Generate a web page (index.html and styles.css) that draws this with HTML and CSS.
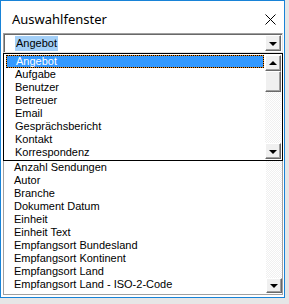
FILE: index.html
```html
<!DOCTYPE html>
<html>
<head>
<meta charset="utf-8">
<link rel="stylesheet" href="styles.css">
</head>
<body>
<div class="window">
  <div class="titlebar">
    <span class="title">Auswahlfenster</span>
    <svg class="close" width="11" height="11" viewBox="0 0 11 11"><path d="M0.5 0.5L10.5 10.5M10.5 0.5L0.5 10.5" stroke="#000" stroke-width="1" fill="none"/></svg>
  </div>
  <div class="content">
    <div class="combo">
      <span class="combo-text"><span class="sel">Angebot</span></span>
      <span class="btn combo-btn"><span class="tri-down"></span></span>
    </div>
    <div class="listbox">
      <div class="list-items">
        <div class="item">Ansprechpartner</div>
        <div class="item">Anzahl Sendungen</div>
        <div class="item">Autor</div>
        <div class="item">Branche</div>
        <div class="item">Dokument Datum</div>
        <div class="item">Einheit</div>
        <div class="item">Einheit Text</div>
        <div class="item">Empfangsort Bundesland</div>
        <div class="item">Empfangsort Kontinent</div>
        <div class="item">Empfangsort Land</div>
        <div class="item">Empfangsort Land - ISO-2-Code</div>
      </div>
      <div class="scrollbar">
        <div class="track"></div>
        <span class="btn sb-btn"><span class="tri-down"></span></span>
      </div>
    </div>
    <div class="dropdown">
      <div class="dd-items">
        <div class="item active">Angebot</div>
        <div class="item">Aufgabe</div>
        <div class="item">Benutzer</div>
        <div class="item">Betreuer</div>
        <div class="item">Email</div>
        <div class="item">Gesprächsbericht</div>
        <div class="item">Kontakt</div>
        <div class="item">Korrespondenz</div>
      </div>
      <div class="scrollbar dd-scroll">
        <span class="btn sb-btn"><span class="tri-up"></span></span>
        <span class="btn thumb"></span>
        <div class="track"></div>
        <span class="btn sb-btn"><span class="tri-down"></span></span>
      </div>
    </div>
  </div>
</div>
</body>
</html>
```
FILE: styles.css
```css
html, body {
  margin: 0;
  padding: 0;
}
body {
  background: #e6e6e6;
  width: 289px;
  height: 304px;
  overflow: hidden;
  font-family: "Liberation Sans", Arial, sans-serif;
}
.window {
  box-sizing: border-box;
  width: 285px;
  height: 298px;
  border: 1px solid #1883d7;
  background: #fff;
  display: flex;
  flex-direction: column;
}
.titlebar {
  height: 32px;
  display: flex;
  align-items: center;
  justify-content: space-between;
  padding: 0 8px 0 11px;
  flex: none;
}
.title {
  font-family: "Noto Sans", "Open Sans", sans-serif;
  font-size: 13px;
  color: #000;
  margin-top: 3px;
}
.close {
  display: block;
  margin-top: 4px;
}
.content {
  position: relative;
  padding: 0 1px 0 2px;
  flex: 1;
  display: flex;
  flex-direction: column;
}
.combo {
  box-sizing: border-box;
  height: 20px;
  border: 1px solid;
  border-color: #a0a0a0 #e3e3e3 #e3e3e3 #a0a0a0;
  box-shadow: inset 1px 1px 0 #696969;
  display: flex;
  align-items: center;
  justify-content: space-between;
  padding: 0 1px 0 11px;
  font-size: 11px;
}
.sel {
  display: inline-block;
  background: #a3cff7;
  color: #000;
  padding: 1px 1px;
  line-height: 13px;
}
.btn {
  box-sizing: border-box;
  display: flex;
  align-items: center;
  justify-content: center;
  background: #f0f0f0;
  border: 1px solid;
  border-color: #fff #696969 #696969 #fff;
  box-shadow: inset -1px -1px 0 #a0a0a0;
  flex: none;
}
.combo-btn {
  width: 16px;
  height: 16px;
}
.tri-down {
  width: 0;
  height: 0;
  border-left: 4px solid transparent;
  border-right: 4px solid transparent;
  border-top: 4px solid #000;
  margin-top: 1px;
}
.tri-up {
  width: 0;
  height: 0;
  border-left: 4px solid transparent;
  border-right: 4px solid transparent;
  border-bottom: 4px solid #000;
  margin-bottom: 1px;
}
.listbox {
  box-sizing: border-box;
  margin-top: 2px;
  height: 240px;
  border: 1px solid #a0a0a0;
  display: flex;
  overflow: hidden;
}
.list-items {
  flex: 1;
  padding-top: 92px;
  overflow: hidden;
  white-space: nowrap;
}
.item {
  height: 13px;
  line-height: 13px;
  font-size: 11px;
  padding-left: 10px;
  color: #000;
}
.scrollbar {
  width: 16px;
  display: flex;
  flex-direction: column;
  flex: none;
}
.track {
  flex: 1;
  background: repeating-conic-gradient(#f0f0f0 0 25%, #fff 0 50%) 0 0 / 2px 2px;
}
.sb-btn {
  width: 16px;
  height: 15px;
}
.listbox .scrollbar .sb-btn {
  margin-bottom: 1px;
}
.dropdown {
  position: absolute;
  left: 2px;
  top: 20px;
  width: 280px;
  height: 108px;
  box-sizing: border-box;
  border: 1px solid #000;
  background: #fff;
  display: flex;
  padding: 1px 1px 1px 1px;
}
.dd-items {
  flex: 1;
  overflow: hidden;
  padding-right: 1px;
}
.dd-items .item {
  padding-left: 10px;
}
.item.active {
  box-sizing: border-box;
  border: 1px dotted #000;
  background: linear-gradient(#3399ff, #3399ff) padding-box, linear-gradient(#f08a1c, #f08a1c) border-box;
  color: #fff;
  line-height: 11px;
  padding-left: 9px;
  margin-left: 1px;
}
.dd-scroll .sb-btn {
  height: 16px;
}
.thumb {
  width: 16px;
  height: 21px;
}
```
